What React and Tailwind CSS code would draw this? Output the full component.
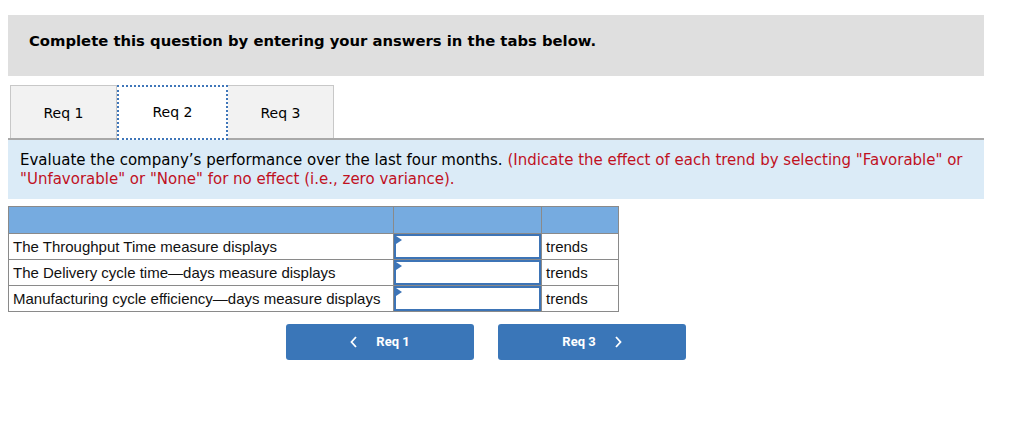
import React from 'react';

const rows = [
  'The Throughput Time measure displays',
  'The Delivery cycle time\u2014days measure displays',
  'Manufacturing cycle efficiency\u2014days measure displays',
];

const verdana = { fontFamily: '"DejaVu Sans", Verdana, sans-serif' };

export default function App() {
  return (
    <div className="w-[1024px] h-[433px] bg-white pl-[8px] pt-[15px]">
      <div className="w-[976px]">
        {/* Header */}
        <div className="h-[61px] bg-[#dfdfdf] pl-[21px] pt-[17px]">
          <p className="text-[14.8px] leading-[18px] font-bold text-black" style={verdana}>
            Complete this question by entering your answers in the tabs below.
          </p>
        </div>

        {/* Tabs */}
        <div className="mt-[9px] flex pl-[2px] border-b-2 border-[#a9a9a9]">
          <div className="w-[107px] h-[53px] bg-[#f2f2f2] border border-b-0 border-[#c8c8c8] flex items-center justify-center text-[14px] text-black pt-[2px]" style={verdana}>
            Req 1
          </div>
          <div className="w-[111px] h-[55px] -mb-[2px] bg-white border-2 border-dotted border-[#3f76b9] flex items-center justify-center text-[14px] text-black relative z-10" style={verdana}>
            Req 2
          </div>
          <div className="w-[106px] h-[53px] bg-[#f2f2f2] border border-b-0 border-l-0 border-[#c8c8c8] flex items-center justify-center text-[14px] text-black pt-[2px]" style={verdana}>
            Req 3
          </div>
        </div>

        {/* Instructions */}
        <div className="h-[59px] bg-[#dbebf7] pl-[12px] pt-[11px] text-[15px] leading-[19px] text-black" style={verdana}>
          Evaluate the company’s performance over the last four months.{' '}
          <span className="text-[#c0111f]">
            (Indicate the effect of each trend by selecting "Favorable" or "Unfavorable" or "None" for no effect (i.e., zero variance).
          </span>
        </div>

        {/* Table */}
        <table className="mt-[7px] border-collapse text-[15px] text-[#111]" style={{ fontFamily: '"Liberation Sans", Arial, sans-serif' }}>
          <thead>
            <tr className="bg-[#76abe0] h-[27px]">
              <th className="w-[385px] border border-[#8a8a8a]"></th>
              <th className="w-[148px] border border-[#8a8a8a]"></th>
              <th className="w-[77px] border border-[#8a8a8a]"></th>
            </tr>
          </thead>
          <tbody>
            {rows.map((label) => (
              <tr key={label} className="h-[26px]">
                <td className="border border-[#8a8a8a] px-[4px] leading-[18px] whitespace-nowrap">{label}</td>
                <td className="border border-[#8a8a8a] p-0">
                  <div className="relative h-[25px] border-2 border-[#3d74b6] bg-white">
                    <svg className="absolute left-0 top-0" width="6" height="8" viewBox="0 0 6 8">
                      <polygon points="0,0 6,4 0,8" fill="#3d74b6" />
                    </svg>
                  </div>
                </td>
                <td className="border border-[#8a8a8a] px-[4px] leading-[18px]">trends</td>
              </tr>
            ))}
          </tbody>
        </table>

        {/* Nav buttons */}
        <div className="mt-[12px] flex gap-[24px] pl-[278px]" style={{ fontFamily: 'Roboto, "Liberation Sans", sans-serif' }}>
          <button className="w-[188px] h-[36px] rounded-[3px] bg-[#3a76b8] text-white text-[13px] font-bold flex items-center justify-center gap-[18px]">
            <svg width="8" height="12" viewBox="0 0 8 12" fill="none" stroke="white" strokeWidth="1.8">
              <polyline points="6,1 1.5,6 6,11" />
            </svg>
            <span>Req 1</span>
          </button>
          <button className="w-[188px] h-[36px] rounded-[3px] bg-[#3a76b8] text-white text-[13px] font-bold flex items-center justify-center gap-[18px]">
            <span>Req 3</span>
            <svg width="8" height="12" viewBox="0 0 8 12" fill="none" stroke="white" strokeWidth="1.8">
              <polyline points="2,1 6.5,6 2,11" />
            </svg>
          </button>
        </div>
      </div>
    </div>
  );
}
